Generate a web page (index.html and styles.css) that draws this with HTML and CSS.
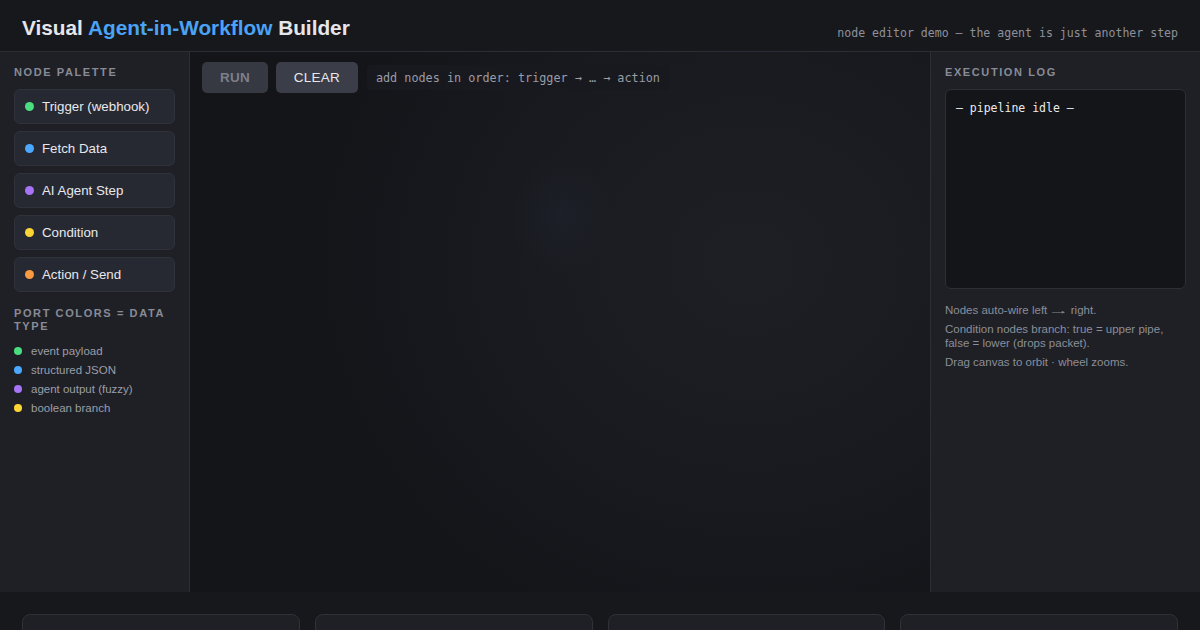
FILE: index.html
```html
<!DOCTYPE html>
<html lang="en">
<head>
<meta charset="utf-8">
<title>Visual Agent-in-Workflow Builder</title>
<link rel="stylesheet" href="styles.css">
</head>
<body>
<header class="topbar">
  <h1 class="title">Visual <span class="accent">Agent-in-Workflow</span> Builder</h1>
  <div class="subtitle">node editor demo — the agent is just another step</div>
</header>
<main class="main">
  <aside class="sidebar">
    <div class="label">Node Palette</div>
    <div class="palette">
      <div class="pal-item"><span class="dot green"></span>Trigger (webhook)</div>
      <div class="pal-item"><span class="dot blue"></span>Fetch Data</div>
      <div class="pal-item"><span class="dot purple"></span>AI Agent Step</div>
      <div class="pal-item"><span class="dot yellow"></span>Condition</div>
      <div class="pal-item"><span class="dot orange"></span>Action / Send</div>
    </div>
    <div class="label legend-label">Port colors = data type</div>
    <ul class="legend">
      <li><span class="ldot green"></span>event payload</li>
      <li><span class="ldot blue"></span>structured JSON</li>
      <li><span class="ldot purple"></span>agent output (fuzzy)</li>
      <li><span class="ldot yellow"></span>boolean branch</li>
    </ul>
  </aside>
  <section class="canvas">
    <div class="toolbar">
      <button class="btn btn-disabled">RUN</button>
      <button class="btn">CLEAR</button>
      <div class="hint">add nodes in order: trigger → … → action</div>
    </div>
  </section>
  <aside class="logpanel">
    <div class="label">Execution Log</div>
    <div class="logbox">— pipeline idle —</div>
    <div class="help">
      <p>Nodes auto-wire left<span class="arrow">→</span>right.</p>
      <p>Condition nodes branch: true = upper pipe, false = lower (drops packet).</p>
      <p>Drag canvas to orbit · wheel zooms.</p>
    </div>
  </aside>
</main>
<footer class="bottom">
  <div class="card"></div>
  <div class="card"></div>
  <div class="card"></div>
  <div class="card"></div>
</footer>
</body>
</html>
```
FILE: styles.css
```css
* { box-sizing: border-box; }
html, body {
  margin: 0;
  padding: 0;
  width: 1200px;
  height: 630px;
  overflow: hidden;
  background: #17181c;
  font-family: "Liberation Sans", Arial, sans-serif;
  color: #e4e4e8;
}
.topbar {
  height: 52px;
  border-bottom: 1px solid #2c2e35;
  background: #17181c;
  display: flex;
  align-items: center;
  justify-content: space-between;
  padding: 5px 22px 0;
}
.title {
  margin: 0;
  font-size: 20.8px;
  font-weight: 700;
  color: #e6e6ea;
}
.accent { color: #4aa3f5; }
.subtitle {
  font-family: "DejaVu Sans Mono", monospace;
  font-size: 11.55px;
  color: #8d909b;
  padding-top: 9px;
}
.main {
  display: flex;
  height: 540px;
}
.sidebar {
  width: 190px;
  flex: none;
  background: #1f2025;
  border-right: 1px solid #2c2e35;
  padding: 14px 14px;
}
.label {
  font-size: 11px;
  font-weight: 700;
  letter-spacing: 1.6px;
  text-transform: uppercase;
  color: #888b97;
  line-height: 13px;
}
.palette {
  display: flex;
  flex-direction: column;
  gap: 7px;
  margin-top: 10px;
}
.pal-item {
  height: 35px;
  background: #272932;
  border: 1px solid #30323b;
  border-radius: 6px;
  display: flex;
  align-items: center;
  gap: 8px;
  padding: 0 10px;
  font-size: 13.3px;
  color: #e8e8ec;
}
.dot {
  width: 9px;
  height: 9px;
  border-radius: 50%;
  flex: none;
}
.green { background: #4ade80; }
.blue { background: #4aa8ff; }
.purple { background: #a774f7; }
.yellow { background: #fcd535; }
.orange { background: #fb9a40; }
.legend-label { margin-top: 15px; }
.legend {
  list-style: none;
  margin: 8px 0 0;
  padding: 0;
}
.legend li {
  display: flex;
  align-items: center;
  gap: 9px;
  height: 19px;
  font-size: 11.5px;
  color: #9b9ea8;
}
.ldot {
  width: 8px;
  height: 8px;
  border-radius: 50%;
  flex: none;
}
.canvas {
  flex: 1;
  background: radial-gradient(ellipse 440px 400px at 560px 210px, #1e1f25 0%, #1b1c21 38%, #141519 100%);
  padding: 10px 12px;
  position: relative;
}
.canvas::after {
  content: "";
  position: absolute;
  left: 320px;
  top: 100px;
  width: 100px;
  height: 125px;
  border-radius: 50%;
  background: radial-gradient(ellipse at center, rgba(34, 42, 66, 0.25) 0%, rgba(34, 42, 66, 0) 70%);
  pointer-events: none;
}
.toolbar {
  display: flex;
  align-items: center;
  gap: 8px;
}
.btn {
  height: 31px;
  border: none;
  border-radius: 5px;
  background: #3b3d48;
  color: #e8e8ec;
  font-family: "Liberation Sans", Arial, sans-serif;
  font-size: 13.5px;
  padding: 0 18px;
  letter-spacing: 0.2px;
}
.btn-disabled {
  background: #363842;
  color: #7c7f8a;
  font-weight: 700;
  padding: 0 18px;
}
.hint {
  margin-left: 1px;
  background: #18191e;
  border-radius: 4px;
  height: 25px;
  display: flex;
  align-items: center;
  padding: 0 9px;
  font-family: "DejaVu Sans Mono", monospace;
  font-size: 11.8px;
  color: #9a9ca6;
}
.logpanel {
  width: 270px;
  flex: none;
  background: #1f2025;
  border-left: 1px solid #2c2e35;
  padding: 14px 14px;
}
.logbox {
  margin-top: 10px;
  height: 200px;
  background: #141519;
  border: 1px solid #2d2f37;
  border-radius: 6px;
  padding: 11px 10px;
  font-family: "DejaVu Sans Mono", monospace;
  font-size: 11.5px;
  color: #ececec;
}
.help {
  margin-top: 14px;
  font-size: 11.5px;
  line-height: 14px;
  color: #8b8e99;
}
.help p { margin: 0 0 5px; }
.arrow {
  display: inline-block;
  transform: scaleX(1.9);
  margin: 0 6px;
}
.bottom {
  display: grid;
  grid-template-columns: repeat(4, 1fr);
  gap: 15px;
  padding: 22px 22px 0;
  height: 38px;
  background: #17181c;
}
.card {
  height: 40px;
  background: #1f2025;
  border: 1px solid #2f3139;
  border-radius: 8px;
}
```
